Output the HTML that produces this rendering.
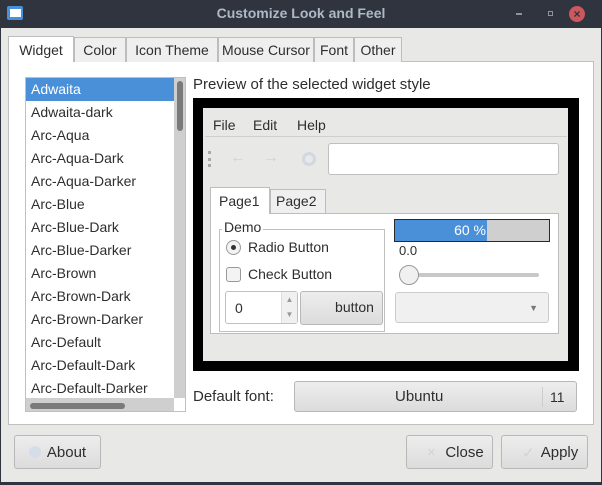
<html><head><style>
*{box-sizing:border-box}
body{margin:0;width:602px;height:485px;background:#2f343f;font-family:"Liberation Sans",sans-serif;font-size:14px;color:#2e2e2e;position:relative;overflow:hidden}
.a{position:absolute;white-space:nowrap}
.win{left:1px;top:28px;width:600px;height:454px;background:#e8e8e7}
.tab{top:37px;height:25px;border:1px solid #bdbdbd;border-bottom:none;background:#efefef;padding:4px 0 0;font-size:14px;text-align:center;overflow:hidden}
.btn{border:1px solid #b8b8b8;border-radius:3px;background:linear-gradient(#ededed,#dcdcdc);text-align:center}
.li{left:26px;width:148px;height:23px;padding:3px 5px;font-size:14px}
</style></head><body>
<div class="a" style="left:7px;top:6px;width:16px;height:14px;background:#4a90d9;border-radius:2px"><div class="a" style="left:3px;top:3px;width:11px;height:8px;background:#fff"></div></div>
<div class="a" style="left:0;width:602px;top:5px;text-align:center;color:#afb8c5;font-weight:bold;font-size:14px">Customize Look and Feel</div>
<div class="a" style="left:516px;top:13px;width:6px;height:2px;background:#8b93a0"></div>
<div class="a" style="left:548px;top:11px;width:5px;height:5px;border:1px solid #8b93a0"></div>
<div class="a" style="left:569px;top:6px;width:16px;height:16px;border-radius:50%;background:#cc575d;color:#2f343f;font-size:12px;text-align:center;line-height:16px;font-weight:bold">×</div>
<div class="a win"></div>
<div class="a" style="left:8px;top:61px;width:586px;height:364px;background:#fff;border:1px solid #c0c0c0"></div>
<div class="a tab" style="left:8px;top:36px;height:26px;background:#fff;width:66px;padding-top:5px">Widget</div>
<div class="a tab" style="left:74px;width:52px">Color</div>
<div class="a tab" style="left:126px;width:92px">Icon Theme</div>
<div class="a tab" style="left:218px;width:96px">Mouse Cursor</div>
<div class="a tab" style="left:314px;width:40px">Font</div>
<div class="a tab" style="left:354px;width:48px">Other</div>
<div class="a" style="left:25px;top:77px;width:161px;height:335px;border:1px solid #c0c0c0;background:#fff;overflow:hidden">
<div class="a" style="left:148px;top:0;width:12px;height:320px;background:#cfcfcf"></div>
<div class="a" style="left:151px;top:3px;width:6px;height:50px;background:#7a7a7a;border-radius:3px"></div>
<div class="a" style="left:0;top:320px;width:148px;height:14px;background:#cfcfcf"></div>
<div class="a" style="left:4px;top:325px;width:95px;height:6px;background:#7a7a7a;border-radius:3px"></div>
</div>
<div class="a li" style="top:78px;background:#4a90d9;color:#fff">Adwaita</div>
<div class="a li" style="top:101px">Adwaita-dark</div>
<div class="a li" style="top:124px">Arc-Aqua</div>
<div class="a li" style="top:147px">Arc-Aqua-Dark</div>
<div class="a li" style="top:170px">Arc-Aqua-Darker</div>
<div class="a li" style="top:193px">Arc-Blue</div>
<div class="a li" style="top:216px">Arc-Blue-Dark</div>
<div class="a li" style="top:239px">Arc-Blue-Darker</div>
<div class="a li" style="top:262px">Arc-Brown</div>
<div class="a li" style="top:285px">Arc-Brown-Dark</div>
<div class="a li" style="top:308px">Arc-Brown-Darker</div>
<div class="a li" style="top:331px">Arc-Default</div>
<div class="a li" style="top:354px">Arc-Default-Dark</div>
<div class="a li" style="top:377px">Arc-Default-Darker</div>
<div class="a" style="left:193px;top:76px;font-size:15px">Preview of the selected widget style</div>
<div class="a" style="left:193px;top:98px;width:386px;height:273px;background:#000"></div>
<div class="a" style="left:203px;top:108px;width:365px;height:253px;background:#e8e8e7"></div>
<div class="a" style="left:213px;top:117px">File</div><div class="a" style="left:253px;top:117px">Edit</div><div class="a" style="left:297px;top:117px">Help</div>
<div class="a" style="left:205px;top:136px;width:362px;height:1px;background:#cfcfcf"></div>
<div class="a" style="left:208px;top:151px;width:3px;height:16px;border-left:3px dotted #aaa"></div>
<div class="a" style="left:230px;top:149px;color:#c9d3df;font-size:16px">←</div>
<div class="a" style="left:263px;top:149px;color:#c9d3df;font-size:16px">→</div>
<div class="a" style="left:302px;top:152px;width:14px;height:14px;border-radius:50%;border:3px solid #d0d8e2"></div>
<div class="a" style="left:328px;top:143px;width:231px;height:32px;background:#fff;border:1px solid #c0c0c0;border-radius:3px"></div>
<div class="a" style="left:210px;top:213px;width:349px;height:121px;background:#fff;border:1px solid #bdbdbd"></div>
<div class="a" style="left:210px;top:187px;width:60px;height:27px;background:#fff;border:1px solid #bdbdbd;border-bottom:none;padding:5px 8px">Page1</div>
<div class="a" style="left:270px;top:189px;width:56px;height:24px;background:#efefef;border:1px solid #bdbdbd;border-bottom:none;padding:3px 5px">Page2</div>
<div class="a" style="left:219px;top:229px;width:166px;height:103px;border:1px solid #c0c0c0"></div>
<div class="a" style="left:222px;top:219px;background:#fff;padding:0 2px">Demo</div>
<div class="a" style="left:226px;top:240px;width:15px;height:15px;border-radius:50%;border:1px solid #999;background:#f3f3f3"><div class="a" style="left:4px;top:4px;width:5px;height:5px;border-radius:50%;background:#333"></div></div>
<div class="a" style="left:248px;top:239px">Radio Button</div>
<div class="a" style="left:226px;top:267px;width:15px;height:15px;border-radius:3px;border:1px solid #999;background:#f3f3f3"></div>
<div class="a" style="left:248px;top:266px">Check Button</div>
<div class="a" style="left:225px;top:291px;width:73px;height:33px;background:#fff;border:1px solid #c0c0c0;border-radius:3px;padding:8px 9px">0</div>
<div class="a" style="left:281px;top:292px;width:16px;height:31px;background:#f0f0f0;border-left:1px solid #ddd;font-size:8px;color:#999;text-align:center;line-height:15px">▲<br>▼</div>
<div class="a btn" style="left:300px;top:291px;width:83px;height:34px;padding:7px 0 0 26px">button</div>
<div class="a" style="left:394px;top:219px;width:156px;height:23px;background:#cfcfcf;border:1px solid #2a2a2a"></div>
<div class="a" style="left:395px;top:220px;width:92px;height:21px;background:#4a90d9;color:#fff;text-align:right;padding:2px 1px 0 0">60 %</div>
<div class="a" style="left:399px;top:243px;font-size:13px">0.0</div>
<div class="a" style="left:402px;top:273px;width:137px;height:4px;background:#c8c8c8;border-radius:2px"></div>
<div class="a" style="left:399px;top:265px;width:20px;height:20px;border-radius:50%;border:1px solid #999;background:#f0f0f0"></div>
<div class="a" style="left:395px;top:292px;width:154px;height:31px;background:#f0f0f0;border:1px solid #ccc;border-radius:3px;color:#777;font-size:9px;text-align:right;padding:10px 10px 0 0">▼</div>
<div class="a" style="left:193px;top:388px;font-size:15px">Default font:</div>
<div class="a btn" style="left:294px;top:381px;width:283px;height:31px"><div class="a" style="left:100px;top:6px;font-size:15px">Ubuntu</div><div class="a" style="left:247px;top:5px;height:20px;border-left:1px solid #ccc;padding:2px 0 0 7px">11</div></div>
<div class="a btn" style="left:14px;top:435px;width:87px;height:34px;padding:8px 0 0 18px;font-size:15px">About<div class="a" style="left:14px;top:10px;width:12px;height:12px;border-radius:50%;background:#d4dde8"></div></div>
<div class="a btn" style="left:406px;top:435px;width:87px;height:34px;padding:8px 0 0 30px;font-size:15px"><span style="color:#cbd3de;position:absolute;left:20px">×</span>Close</div>
<div class="a btn" style="left:501px;top:435px;width:87px;height:34px;padding:8px 0 0 30px;font-size:15px"><span style="color:#cbd3de;position:absolute;left:20px">✓</span>Apply</div>
</body></html>
